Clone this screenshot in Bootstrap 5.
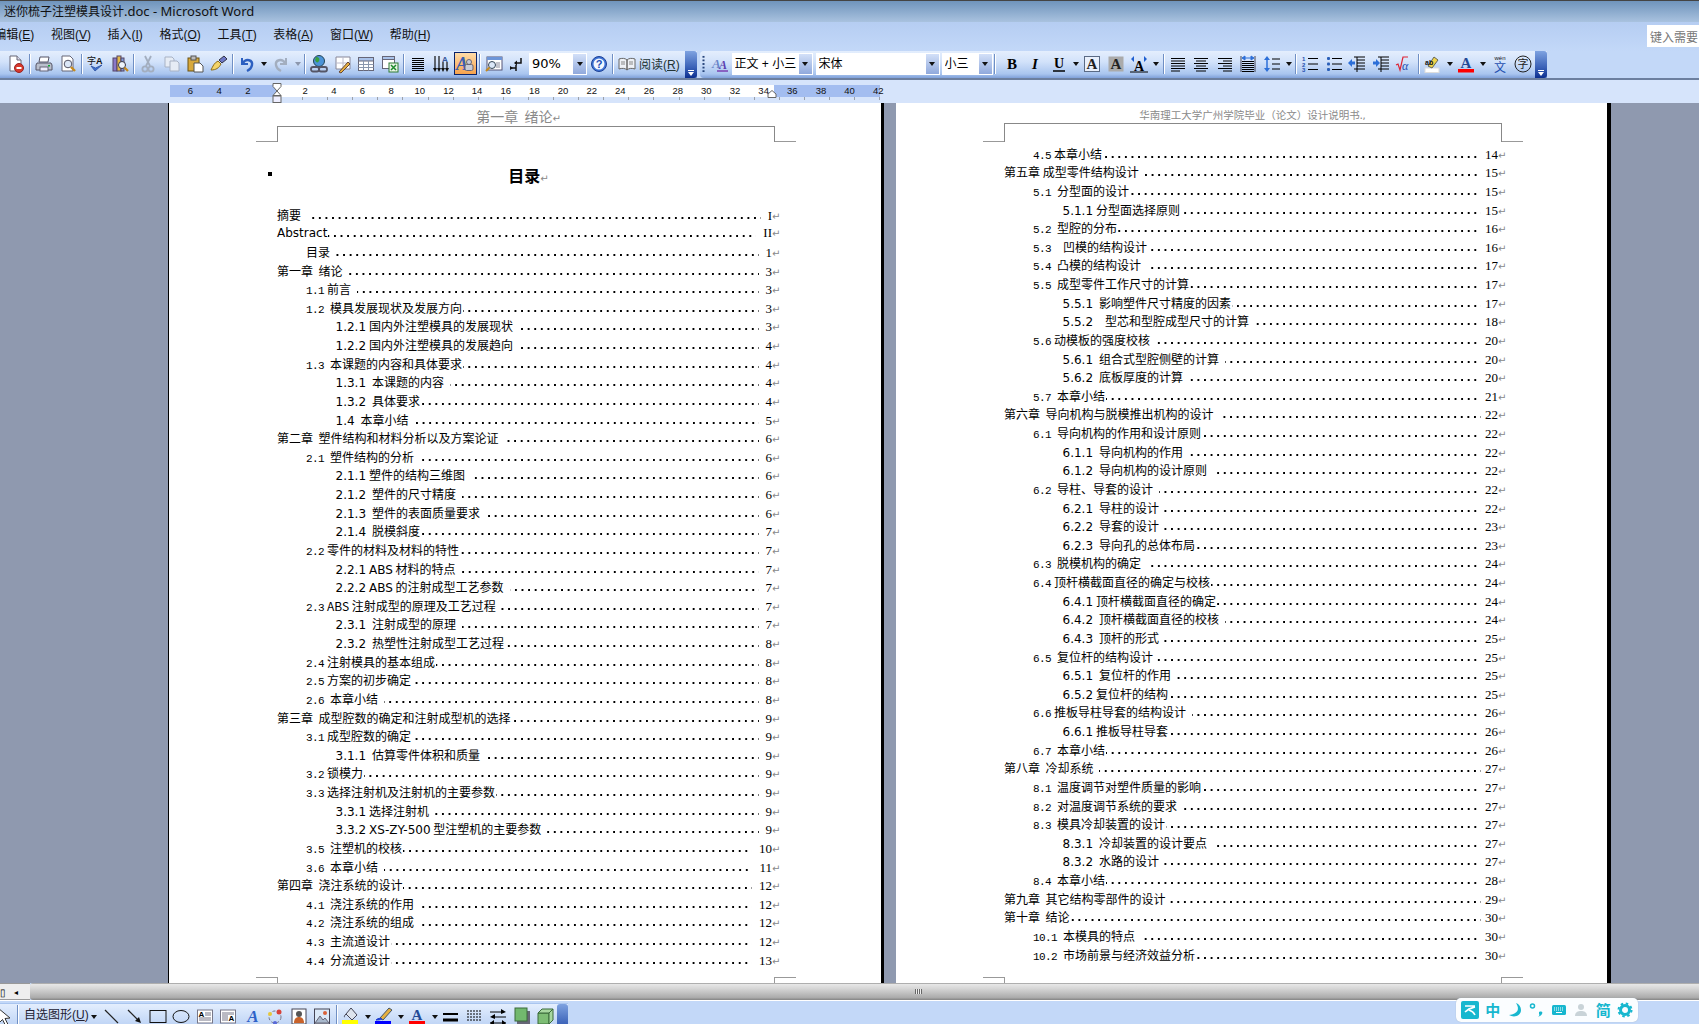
<!DOCTYPE html>
<html lang="zh"><head><meta charset="utf-8"><title>Microsoft Word</title>
<link href="https://cdn.jsdelivr.net/npm/bootstrap@5.3.0/dist/css/bootstrap.min.css" rel="stylesheet">
<style>
html,body{height:100%;overflow:hidden;margin:0}
body{font-family:"Noto Sans CJK SC","Noto Sans",sans-serif;font-size:12px;color:#000;background:#c3d8f8}
.app{height:1024px;width:1699px;overflow:hidden;position:relative}
.ttl{height:22px;border-top:1px solid #444;background:linear-gradient(180deg,#6f94bc,#a9c2df);font:13px/21px "Noto Sans","Noto Sans CJK SC",sans-serif;color:#111;white-space:nowrap;overflow:hidden;flex:none;padding-left:4px}
.ttl b{font-weight:400;font-size:12px}
.mbar{height:29px;background:linear-gradient(180deg,#b5cdf2,#c3d8f8);flex:none;overflow:hidden}
.mbar>span{padding:0 8.3px;font:12px/26px "Liberation Sans","Noto Sans CJK SC",sans-serif;color:#111;white-space:nowrap}
.mbar>span:first-child{margin-left:-14px}
.mbar>.askb{margin-left:auto;margin-top:3px;background:#fff;width:52px;height:22px;color:#777;padding:0 3px;overflow:hidden}
.tbars{height:29px;flex:none;border-bottom:2px solid #6c7f9f;gap:3px}
.tool{height:27px;padding-bottom:2px;background:linear-gradient(180deg,#e4eefd 0,#d2e2fa 40%,#a9c5ef 85%,#7fa0d9 100%);align-items:center}
.t1{width:697px;padding-left:4px}
.t2{width:847px;border-radius:4px 0 0 4px}
.cap{width:12px;height:27px;margin-left:auto;align-self:flex-start;border-radius:0 3px 3px 0;background:linear-gradient(180deg,#7ea2e0,#3b62b8 60%,#0c2f8f);position:relative;flex:none}
.cap::after{content:"";position:absolute;left:3px;bottom:7px;width:6px;height:1px;background:#fff}
.cap::before{content:"";position:absolute;left:3px;bottom:2px;border:3px solid transparent;border-top:4px solid #fff;border-bottom:0}
.ib{width:23.5px;height:23px;display:flex;align-items:center;justify-content:center;flex:none}
.ib svg{width:18px;height:18px;display:block;overflow:visible}
.ib.on{background:linear-gradient(180deg,#ffdca8,#f6a24c);border:1px solid #0a246a}
.sp{width:5px;height:22px;flex:none;display:flex;justify-content:center}
.sp::before{content:"";width:2px;height:20px;margin-top:1px;background:linear-gradient(90deg,#6f8fc4 50%,#fff 50%)}
.spx{width:2.5px;flex:none}
.dd{width:10px;flex:none;display:flex;justify-content:center}
.dd::before{content:"";border:3.5px solid transparent;border-top:4px solid #111;border-bottom:0}
.dd.off::before{border-top-color:#8c97ad}
.gr{width:6px;height:18px;flex:none;margin-left:2px;background:radial-gradient(circle,#26447a 1px,transparent 1.2px) 0 0/3px 3.6px repeat-y}
.cb{height:22px;background:#fff;display:flex;flex:none;white-space:nowrap;padding-left:2px;line-height:21px;font-family:"Liberation Sans","Noto Sans CJK SC",sans-serif;font-size:12px;overflow:hidden;border:1px solid #fff}
.cb b{font-weight:400;flex:1;overflow:hidden}
.cb i{width:13px;flex:none;background:linear-gradient(180deg,#d3e0f8,#90a9dc);display:flex;align-items:center;justify-content:center}
.cb i::before{content:"";border:3.5px solid transparent;border-top:4px solid #111;border-bottom:0}
.c90{width:58px;font:13px/20px "DejaVu Sans",sans-serif}
.c1{width:81px}.c2{width:124px;margin-left:3px}.c3{width:51px;margin-left:2px}
.tbt{width:40px;flex:none;white-space:nowrap;font:12px "Liberation Sans","Noto Sans CJK SC",sans-serif;color:#233}
.rul{height:23px;background:#d6e4fb;flex:none;position:relative}
.rin{margin-left:170px;width:710px}
.rnum{height:12px;margin-top:5px;padding-left:6.2px;background:linear-gradient(90deg,#a3bdf0 107px,#fff 107px 604px,#a3bdf0 604px)}
.rnum span{width:28.66px;flex:none;text-align:center;font:9.5px/12px "Liberation Sans",sans-serif;color:#111}
.rtk{height:6px;background:repeating-linear-gradient(90deg,#9aa0aa 0 1px,transparent 1px 25.1px) 131.6px 0/100% 3px no-repeat}
.mk1{position:absolute;left:272px;top:3px;width:10px;height:20px}
.mk2{position:absolute;left:767px;top:10px;width:10px;height:8px}
.doc{flex:1;min-height:0;background:#8f99af;padding-left:168px;overflow:hidden}
.pg{background:#fff;flex:none;height:880px;padding-left:108px;overflow:hidden}
.p1{width:716px;border-left:1px solid #000;border-right:3px solid #000;margin-right:12px;padding-top:4px}
.p2{width:715px;border-right:4px solid #000;padding-top:3px}
.htx{font-size:14px;line-height:19px;color:#8a8a8a;text-align:center;margin-right:121px;white-space:pre}
.htx2{font-size:10.5px;line-height:17px;color:#8a8a8a;text-align:center;margin-right:106px;white-space:pre}
.hbx{position:relative;width:498px;height:16px;border:solid #888;border-width:1px 1px 0;flex:none}
.p2 .hbx{height:19px}
.hbx::before,.hbx::after,.fbx::before,.fbx::after{content:"";position:absolute;width:21px;height:1px;background:#999}
.hbx::before{left:-22px;bottom:0}.hbx::after{right:-22px;bottom:0}
.fbx{position:relative;width:498px;height:6px;border:solid #999;border-width:0 1px;margin-top:auto;flex:none}
.fbx::before{left:-22px;top:0}.fbx::after{right:-22px;top:0}
.mlu{width:503px;font-size:16px;font-weight:700;line-height:24px;text-align:center;margin-top:21px;margin-bottom:18.7px;position:relative}
.mlu::before{content:"";position:absolute;left:-9px;top:9px;width:4px;height:4px;background:#000}
.toc{width:503px;flex:none}
.p2 .toc{margin-top:2.7px;width:502px}
.re{font:10px/1 "DejaVu Sans",sans-serif;color:#888;font-style:normal;text-decoration:none;width:8px;flex:none}
.rw{display:flex;height:18.64px;line-height:18.64px;white-space:nowrap;font-size:12px;align-items:baseline}
.rb{padding-left:29px}.rc{padding-left:58.5px}
.nm{font:11px/18.64px "Liberation Mono",monospace;letter-spacing:-.6px;margin-right:6px}
.rc .nm,.lat{font:12px/18.64px "DejaVu Sans",sans-serif;letter-spacing:0}
.nm.t{margin-right:3px}.nm.w{margin-right:12px}
.ld{flex:1;align-self:stretch;margin:0 7px 0 6px;background:linear-gradient(90deg,#000 2px,transparent 2px) right 11px/6.6px 2px repeat-x}
.p2 .ld{margin-right:4px}
.ld.z{margin-left:1px}
.pn{font:13px/18.64px "Liberation Serif",serif}
.scr{height:17px;flex:none}
.sl{width:30px;background:#eee;border-top:1px solid #999;border-bottom:1px solid #999;position:relative;align-items:center;flex:none;overflow:hidden;font-size:10px}
.sa{font-size:8px;margin-left:8px}
.sth{flex:1;border-radius:3px 0 0 3px;background:linear-gradient(180deg,#8e8e8e 0,#e6e6e6 8%,#d8d8d8 30%,#bcbcbc 65%,#acacac 85%,#848484 100%);padding-left:885px;display:flex;align-items:center}
.grip{width:7px;height:5px;background:repeating-linear-gradient(90deg,#666 0 1px,#eee 1px 2px)}
.bot{height:24px;flex:none;border-top:1px solid #fff;padding-top:2px;overflow:hidden}
.tb3{width:568px;height:34px;align-items:flex-start;border-top:1px solid #a9c5ef;background:linear-gradient(180deg,#e4eefd 0,#d2e2fa 30%,#bcd2f4 70%,#a9c5ef 100%);position:relative;flex:none;overflow:hidden}
.tb3 .cap{position:absolute;right:0;top:0;width:11px;height:34px;border-radius:3px 3px 0 0}
.tb3 .sp{height:30px}
.tb3 .dd{margin-top:11px}
.cur{width:15px;height:20px;overflow:hidden;flex:none}
.shp{white-space:nowrap;font:12px/21px "Liberation Sans","Noto Sans CJK SC",sans-serif;width:65px;margin:1px 0 0 4px;flex:none;color:#223}
.ime{position:absolute;left:1456px;top:998px;width:182px;height:24px;background:#fbfdff;border-radius:5px;padding:0 5px;display:flex;align-items:center;justify-content:space-between;color:#17b7cf;font-weight:700;font-size:15px;box-shadow:0 0 1px #9ab}
.ime svg{width:16px;height:16px;display:block;flex:none}
.ime svg.lg{width:18px;height:18px}
.ime span{line-height:16px}
</style></head><body>
<div class="app d-flex flex-column">
<div class="ttl"><b>迷你梳子注塑模具设计</b>.doc - Microsoft Word</div>
<div class="mbar d-flex"><span>编辑(<u>E</u>)</span><span>视图(<u>V</u>)</span><span>插入(<u>I</u>)</span><span>格式(<u>O</u>)</span><span>工具(<u>T</u>)</span><span>表格(<u>A</u>)</span><span>窗口(<u>W</u>)</span><span>帮助(<u>H</u>)</span><span class="askb">键入需要</span></div>
<div class="tbars d-flex">
<div class="tool t1 d-flex">
<div class="ib"><svg viewBox="0 0 18 18"><path d="M3 1h7l4 4v11H3z" fill="#fff" stroke="#667"/><path d="M10 1v4h4" fill="#dde" stroke="#667"/><circle cx="12" cy="13" r="4.5" fill="#d8392b" stroke="#922"/><rect x="9.5" y="12" width="5" height="2" fill="#fff"/></svg></div>
<div class="sp"></div>
<div class="ib"><svg viewBox="0 0 18 18"><path d="M5 2h9l-1 5H4z" fill="#fff" stroke="#556"/><path d="M2 8h14l1 2v5H1v-5z" fill="#b9bfcc" stroke="#556"/><rect x="5" y="12" width="8" height="4" fill="#eef" stroke="#667"/><rect x="13" y="10" width="2" height="1.5" fill="#1a3"/></svg></div>
<div class="ib"><svg viewBox="0 0 18 18"><path d="M3 1h8l3 3v12H3z" fill="#fff" stroke="#667"/><circle cx="9" cy="9" r="3.8" fill="#dbe7f8" stroke="#556"/><path d="M12 12l4 4" stroke="#c58a1d" stroke-width="2.4"/></svg></div>
<div class="sp"></div>
<div class="ib"><svg viewBox="0 0 18 18"><text x="0" y="9" font-family="Noto Sans CJK SC" font-size="9" fill="#111">字</text><text x="9" y="9" font-family="Liberation Sans" font-size="9" font-weight="700" fill="#111">A</text><path d="M4 11l4 5 7-6-6.5 3z" fill="#3d6fd0" stroke="#2a4f9f" stroke-width=".8"/></svg></div>
<div class="ib"><svg viewBox="0 0 18 18"><rect x="2" y="3" width="4" height="13" fill="#8a78c8" stroke="#546"/><rect x="6" y="1" width="4" height="15" fill="#e2b94a" stroke="#546"/><rect x="10" y="3" width="3" height="13" fill="#7f9bd6" stroke="#546"/><circle cx="11" cy="10" r="3.5" fill="#eef4fc" stroke="#334"/><path d="M13.5 12.5l3.5 3.5" stroke="#c58a1d" stroke-width="2.2"/></svg></div>
<div class="sp"></div>
<div class="ib"><svg viewBox="0 0 18 18"><g fill="none" stroke="#a3aebf" stroke-width="1.8"><path d="M6 1l5 10M12 1l-5 10"/><circle cx="6" cy="14" r="2.6"/><circle cx="12" cy="14" r="2.6"/></g></svg></div>
<div class="ib"><svg viewBox="0 0 18 18"><g fill="#e6ecf5" stroke="#a8b2c4"><path d="M2 2h7l2 2v8H2z"/><path d="M7 6h7l2 2v8H7z"/></g></svg></div>
<div class="ib"><svg viewBox="0 0 18 18"><rect x="2" y="3" width="11" height="13" fill="#d8a93c" stroke="#6d5210"/><rect x="5" y="1" width="5" height="4" fill="#bbb" stroke="#555"/><path d="M8 8h6l3 3v6H8z" fill="#fff" stroke="#555"/></svg></div>
<div class="ib"><svg viewBox="0 0 18 18"><path d="M1 15c2-4 3-7 7-9l3 3c-2 4-5 6-10 6z" fill="#f3d469" stroke="#8c6c1a"/><path d="M9 5l5-4 3 3-5 4z" fill="#6d78c8" stroke="#334"/></svg></div>
<div class="sp"></div>
<div class="ib"><svg viewBox="0 0 18 18"><path d="M4 3v6h6" fill="none" stroke="#2c5fc0" stroke-width="2"/><path d="M5 8c3-5 10-3 9 2-.5 3-3 5-5 6" fill="none" stroke="#2c5fc0" stroke-width="2.4"/></svg></div><div class="dd"></div>
<div class="ib"><svg viewBox="0 0 18 18"><path d="M14 3v6H8" fill="none" stroke="#a3aebf" stroke-width="2"/><path d="M13 8c-3-5-10-3-9 2 .5 3 3 5 5 6" fill="none" stroke="#a3aebf" stroke-width="2.4"/></svg></div><div class="dd off"></div>
<div class="sp"></div>
<div class="ib"><svg viewBox="0 0 18 18"><circle cx="9" cy="6" r="5.5" fill="#4b93d8" stroke="#245"/><path d="M6 2c3 0 4 2 3 4S6 8 5 5z" fill="#3aa040"/><g fill="none" stroke="#556" stroke-width="1.8"><rect x="1" y="12" width="8" height="4.5" rx="2"/><rect x="9" y="12" width="8" height="4.5" rx="2"/></g></svg></div>
<div class="ib"><svg viewBox="0 0 18 18"><path d="M2 2h14v12H2z" fill="#fff" stroke="#889"/><path d="M9 2v12M2 8h14" stroke="#bbc"/><path d="M5 17l9-10 2 2-9 9z" fill="#e6b040" stroke="#643"/></svg></div>
<div class="ib"><svg viewBox="0 0 18 18"><rect x="1.5" y="2.5" width="15" height="13" fill="#fff" stroke="#667"/><rect x="1.5" y="2.5" width="15" height="3.5" fill="#a9c2ea" stroke="#667"/><path d="M1.5 9.5h15M1.5 12.5h15M6.5 6v9.5M11.5 6v9.5" stroke="#8a97ad"/></svg></div>
<div class="ib"><svg viewBox="0 0 18 18"><rect x="1.5" y="1.5" width="12" height="12" fill="#fff" stroke="#667"/><rect x="1.5" y="1.5" width="12" height="3" fill="#a9c2ea" stroke="#667"/><rect x="8" y="8" width="9" height="9" fill="#eaf4e6" stroke="#2c7a34"/><path d="M10 10l5 5M15 10l-5 5" stroke="#1d8a2d" stroke-width="1.5"/></svg></div>
<div class="sp"></div>
<div class="ib"><svg viewBox="0 0 18 18"><path d="M3 3.5h12M3 5.5h12M3 7.5h12M3 9.5h12M3 11.5h12M3 13.5h12M3 15.5h12" stroke="#000"/></svg></div>
<div class="ib"><svg viewBox="0 0 18 18"><path d="M2 1v14M6 1v14M10 7v8M14 7v8" stroke="#111" stroke-width="1.2"/><path d="M0 13l2 4 2-4zM4 13l2 4 2-4zM8 13l2 4 2-4zM12 13l2 4 2-4z" fill="#111"/><text x="9" y="7" font-family="Liberation Sans" font-size="8" font-weight="700" fill="#36579a">A</text></svg></div>
<div class="ib on"><svg viewBox="0 0 18 18"><text x="0" y="15" font-family="Liberation Serif" font-size="18" font-style="italic" font-weight="700" fill="#3d5fb0">A</text><circle cx="13" cy="7" r="2.5" fill="#c8ccd8" stroke="#667"/><rect x="9" y="9.5" width="8" height="6" rx="1.5" fill="#c8ccd8" stroke="#667"/></svg></div>
<div class="sp"></div>
<div class="ib"><svg viewBox="0 0 18 18"><rect x="2" y="2" width="15" height="13" fill="#fff" stroke="#557"/><rect x="2" y="2" width="15" height="3" fill="#6d95d8"/><path d="M11 8h4M11 10h4M11 12h4" stroke="#889"/><circle cx="7" cy="10" r="3.5" fill="#dbe7f8" stroke="#345"/><path d="M4.5 12.5L1 16" stroke="#c58a1d" stroke-width="2"/></svg></div>
<div class="ib"><svg viewBox="0 0 18 18"><path d="M13 3v5H7" fill="none" stroke="#111" stroke-width="1.5"/><path d="M9 5.5L6 8l3 2.5z" fill="#111"/><path d="M3 13h5v-3M8 13v3" stroke="#111" stroke-width="1.5" fill="none"/><path d="M2 11l3 2-3 2z" fill="#111"/></svg></div>
<div class="cb c90"><b>90%</b><i></i></div>
<div class="ib"><svg viewBox="0 0 18 18"><circle cx="9" cy="9" r="7.5" fill="#3e74d6" stroke="#1c3f95"/><circle cx="9" cy="9" r="5.5" fill="#f2f6fe"/><text x="9" y="13" text-anchor="middle" font-family="Liberation Sans" font-size="11" font-weight="700" fill="#1d4fb5">?</text></svg></div>
<div class="sp"></div>
<div class="ib"><svg viewBox="0 0 18 18"><path d="M1 4c3-1 6-1 8 1v10c-2-2-5-2-8-1zM17 4c-3-1-6-1-8 1v10c2-2 5-2 8-1z" fill="#eef1f6" stroke="#666"/><path d="M3 7h4M3 9h4M11 7h4M11 9h4" stroke="#888"/></svg></div>
<div class="tbt">阅读(<u>R</u>)</div>
<div class="cap"></div>
</div>
<div class="tool t2 d-flex">
<div class="gr"></div>
<div class="ib"><svg viewBox="0 0 18 18"><text x="1" y="13" font-family="Liberation Serif" font-size="13" font-style="italic" font-weight="700" fill="#6a87c9">A</text><text x="8" y="14" font-family="Liberation Serif" font-size="12" font-style="italic" font-weight="700" fill="#5a3fb0">A</text><path d="M6 16h11" stroke="#7b3fb0" stroke-width="1.5"/></svg></div>
<div class="cb c1"><b>正文 + 小三</b><i></i></div>
<div class="cb c2"><b>宋体</b><i></i></div>
<div class="cb c3"><b>小三</b><i></i></div>
<div class="sp"></div><div class="spx"></div>
<div class="ib"><svg viewBox="0 0 18 18"><text x="9" y="14" text-anchor="middle" font-family="Liberation Serif" font-size="15" font-weight="700" fill="#000">B</text></svg></div>
<div class="ib"><svg viewBox="0 0 18 18"><text x="9" y="14" text-anchor="middle" font-family="Liberation Serif" font-size="15" font-style="italic" font-weight="700" fill="#000">I</text></svg></div>
<div class="ib"><svg viewBox="0 0 18 18"><text x="9" y="13" text-anchor="middle" font-family="Liberation Serif" font-size="14" font-weight="700" fill="#000">U</text><path d="M3 16h12" stroke="#000" stroke-width="1.5"/></svg></div><div class="dd"></div>
<div class="ib"><svg viewBox="0 0 18 18"><rect x="1.5" y="1.5" width="15" height="15" fill="#e9f0fc" stroke="#5a6a84"/><text x="9" y="14" text-anchor="middle" font-family="Liberation Serif" font-size="15" font-weight="700" fill="#222">A</text></svg></div>
<div class="ib"><svg viewBox="0 0 18 18"><rect x="1.5" y="1.5" width="15" height="15" fill="#aaa"/><text x="9" y="14" text-anchor="middle" font-family="Liberation Serif" font-size="15" font-weight="700" fill="#222">A</text></svg></div>
<div class="ib"><svg viewBox="0 0 18 18"><text x="9" y="16" text-anchor="middle" font-family="Liberation Serif" font-size="14" font-weight="700" fill="#000">A</text><path d="M1 4l3-3v6zM17 4l-3-3v6z" fill="#1f5fd0"/><path d="M0 17h18" stroke="#000"/></svg></div><div class="dd"></div>
<div class="sp"></div>
<div class="ib"><svg viewBox="0 0 18 18"><path d="M2 3.5h14M2 6h14M2 8.5h14M2 11h14M2 13.5h14M2 16h9" stroke="#000"/></svg></div>
<div class="ib"><svg viewBox="0 0 18 18"><path d="M2 3.5h14M4 6h10M2 8.5h14M4 11h10M2 13.5h14M4 16h10" stroke="#000"/></svg></div>
<div class="ib"><svg viewBox="0 0 18 18"><path d="M2 3.5h14M7 6h9M2 8.5h14M7 11h9M2 13.5h14M7 16h9" stroke="#000"/></svg></div>
<div class="ib"><svg viewBox="0 0 18 18"><path d="M2 1v16M16 1v16" stroke="#445"/><path d="M3 6.5h12M3 8.5h12M3 10.5h12M3 12.5h12M3 14.5h12M3 16.5h12" stroke="#000"/><path d="M3 3l3-2v4zM15 3l-3-2v4zM6 3h6" fill="#2c6fd8" stroke="#2c6fd8"/></svg></div>
<div class="ib"><svg viewBox="0 0 18 18"><path d="M4 4v10" stroke="#2c6fd8" stroke-width="1.5"/><path d="M1 5l3-4 3 4zM1 13l3 4 3-4z" fill="#2c6fd8"/><path d="M9 4h8M9 9h8M9 14h8" stroke="#000"/></svg></div><div class="dd"></div>
<div class="sp"></div>
<div class="ib"><svg viewBox="0 0 18 18"><text x="1" y="6" font-family="Liberation Sans" font-size="6" font-weight="700" fill="#1f4fb0">1</text><text x="1" y="11.5" font-family="Liberation Sans" font-size="6" font-weight="700" fill="#1f4fb0">2</text><text x="1" y="17" font-family="Liberation Sans" font-size="6" font-weight="700" fill="#1f4fb0">3</text><path d="M7 3.5h10M7 9h10M7 14.5h10" stroke="#000"/></svg></div>
<div class="ib"><svg viewBox="0 0 18 18"><g fill="#2a5fb8"><rect x="2" y="2" width="3" height="3" rx="1"/><rect x="2" y="7.5" width="3" height="3" rx="1"/><rect x="2" y="13" width="3" height="3" rx="1"/></g><path d="M7 3.5h10M7 9h10M7 14.5h10" stroke="#000"/></svg></div>
<div class="ib"><svg viewBox="0 0 18 18"><path d="M6 2h11M9 5h8M9 8h8M9 11h8M6 14h11M9 2v15" stroke="#000"/><path d="M0 8l4-4v2.5h3v3H4V12z" fill="#2c6fd8"/></svg></div>
<div class="ib"><svg viewBox="0 0 18 18"><path d="M6 2h11M9 5h8M9 8h8M9 11h8M6 14h11M9 2v15" stroke="#000"/><path d="M8 8l-4-4v2.5H1v3h3V12z" fill="#2c6fd8"/></svg></div>
<div class="ib"><svg viewBox="0 0 18 18"><path d="M1 10l2-1 2 6 3-13h5" fill="none" stroke="#d23" stroke-width="1.2"/><text x="7" y="15" font-family="Liberation Serif" font-size="12" font-style="italic" fill="#1f4fb0">α</text></svg></div>
<div class="sp"></div>
<div class="ib"><svg viewBox="0 0 18 18"><rect x="1" y="13" width="14" height="4.5" fill="#fff" stroke="#ddd"/><path d="M4 11l6-9 4 3-6 8z" fill="#f0d44a" stroke="#665"/><text x="1" y="10" font-family="Liberation Sans" font-size="7" font-weight="700" fill="#111">ab</text></svg></div><div class="dd"></div>
<div class="ib"><svg viewBox="0 0 18 18"><text x="9" y="13" text-anchor="middle" font-family="Liberation Serif" font-size="15" font-weight="700" fill="#234a96">A</text><rect x="1" y="14" width="16" height="3.5" fill="#f00"/></svg></div><div class="dd"></div>
<div class="ib"><svg viewBox="0 0 18 18"><text x="9" y="5" text-anchor="middle" font-family="Liberation Sans" font-size="6" fill="#111">wén</text><text x="9" y="17" text-anchor="middle" font-family="Noto Sans CJK SC" font-size="12" fill="#1f4fb0">文</text></svg></div>
<div class="ib"><svg viewBox="0 0 18 18"><circle cx="9" cy="9" r="8" fill="none" stroke="#222"/><text x="9" y="13" text-anchor="middle" font-family="Noto Sans CJK SC" font-size="11" fill="#222">字</text></svg></div>
<div class="cap"></div>
</div>
</div>
<div class="rul">
<div class="rin">
<div class="rnum d-flex"><span>6</span><span>4</span><span>2</span><span></span><span>2</span><span>4</span><span>6</span><span>8</span><span>10</span><span>12</span><span>14</span><span>16</span><span>18</span><span>20</span><span>22</span><span>24</span><span>26</span><span>28</span><span>30</span><span>32</span><span>34</span><span>36</span><span>38</span><span>40</span><span>42</span></div>
<div class="rtk"></div>
</div>
<svg class="mk1" viewBox="0 0 10 20"><path d="M1 .5h8v3L5 8 1 3.5z" fill="#fff" stroke="#666"/><path d="M1 12.5L5 8l4 4.5z" fill="#fff" stroke="#666"/><rect x="1" y="13" width="8" height="6.5" fill="#eef" stroke="#666"/></svg>
<svg class="mk2" viewBox="0 0 10 8"><path d="M5 .5l4 3.5v3.5H1V4z" fill="#fff" stroke="#666"/></svg>
</div>
<div class="doc d-flex">
<div class="pg p1 d-flex flex-column">
<div class="htx">第一章  绪论<i class="re">↵</i></div>
<div class="hbx"></div>
<div class="mlu">目录<i class="re">↵</i></div>
<div class="toc">
<div class="rw"><span class="me-1">摘要</span><i class="ld"></i><span class="pn">I</span><i class="re">↵</i></div>
<div class="rw"><span class="lat">Abstract</span><i class="ld z"></i><span class="pn">II</span><i class="re">↵</i></div>
<div class="rw rb"><span>目录</span><i class="ld"></i><span class="pn">1</span><i class="re">↵</i></div>
<div class="rw"><span>第一章&nbsp; 绪论</span><i class="ld"></i><span class="pn">3</span><i class="re">↵</i></div>
<div class="rw rb"><span class="nm t">1.1</span><span>前言</span><i class="ld"></i><span class="pn">3</span><i class="re">↵</i></div>
<div class="rw rb"><span class="nm">1.2</span><span>模具发展现状及发展方向</span><i class="ld z"></i><span class="pn">3</span><i class="re">↵</i></div>
<div class="rw rc"><span class="nm t">1.2.1</span><span>国内外注塑模具的发展现状</span><i class="ld"></i><span class="pn">3</span><i class="re">↵</i></div>
<div class="rw rc"><span class="nm t">1.2.2</span><span>国内外注塑模具的发展趋向</span><i class="ld"></i><span class="pn">4</span><i class="re">↵</i></div>
<div class="rw rb"><span class="nm">1.3</span><span>本课题的内容和具体要求</span><i class="ld z"></i><span class="pn">4</span><i class="re">↵</i></div>
<div class="rw rc"><span class="nm">1.3.1</span><span>本课题的内容</span><i class="ld"></i><span class="pn">4</span><i class="re">↵</i></div>
<div class="rw rc"><span class="nm">1.3.2</span><span>具体要求</span><i class="ld z"></i><span class="pn">4</span><i class="re">↵</i></div>
<div class="rw rc"><span class="nm">1.4</span><span>本章小结</span><i class="ld"></i><span class="pn">5</span><i class="re">↵</i></div>
<div class="rw"><span>第二章&nbsp; 塑件结构和材料分析以及方案论证</span><i class="ld"></i><span class="pn">6</span><i class="re">↵</i></div>
<div class="rw rb"><span class="nm">2.1</span><span>塑件结构的分析</span><i class="ld"></i><span class="pn">6</span><i class="re">↵</i></div>
<div class="rw rc"><span class="nm t">2.1.1</span><span>塑件的结构三维图</span><i class="ld"></i><span class="pn">6</span><i class="re">↵</i></div>
<div class="rw rc"><span class="nm">2.1.2</span><span>塑件的尺寸精度</span><i class="ld"></i><span class="pn">6</span><i class="re">↵</i></div>
<div class="rw rc"><span class="nm">2.1.3</span><span>塑件的表面质量要求</span><i class="ld"></i><span class="pn">6</span><i class="re">↵</i></div>
<div class="rw rc"><span class="nm">2.1.4</span><span>脱模斜度</span><i class="ld z"></i><span class="pn">7</span><i class="re">↵</i></div>
<div class="rw rb"><span class="nm t">2.2</span><span>零件的材料及材料的特性</span><i class="ld z"></i><span class="pn">7</span><i class="re">↵</i></div>
<div class="rw rc"><span class="nm t">2.2.1</span><span><span class="lat">ABS</span> 材料的特点</span><i class="ld"></i><span class="pn">7</span><i class="re">↵</i></div>
<div class="rw rc"><span class="nm t">2.2.2</span><span><span class="lat">ABS</span> 的注射成型工艺参数</span><i class="ld"></i><span class="pn">7</span><i class="re">↵</i></div>
<div class="rw rb"><span class="nm t">2.3</span><span>ABS 注射成型的原理及工艺过程</span><i class="ld z"></i><span class="pn">7</span><i class="re">↵</i></div>
<div class="rw rc"><span class="nm">2.3.1</span><span>注射成型的原理</span><i class="ld"></i><span class="pn">7</span><i class="re">↵</i></div>
<div class="rw rc"><span class="nm">2.3.2</span><span>热塑性注射成型工艺过程</span><i class="ld z"></i><span class="pn">8</span><i class="re">↵</i></div>
<div class="rw rb"><span class="nm t">2.4</span><span>注射模具的基本组成</span><i class="ld z"></i><span class="pn">8</span><i class="re">↵</i></div>
<div class="rw rb"><span class="nm t">2.5</span><span>方案的初步确定</span><i class="ld z"></i><span class="pn">8</span><i class="re">↵</i></div>
<div class="rw rb"><span class="nm">2.6</span><span>本章小结</span><i class="ld"></i><span class="pn">8</span><i class="re">↵</i></div>
<div class="rw"><span>第三章&nbsp; 成型腔数的确定和注射成型机的选择</span><i class="ld z"></i><span class="pn">9</span><i class="re">↵</i></div>
<div class="rw rb"><span class="nm t">3.1</span><span>成型腔数的确定</span><i class="ld z"></i><span class="pn">9</span><i class="re">↵</i></div>
<div class="rw rc"><span class="nm">3.1.1</span><span>估算零件体积和质量</span><i class="ld"></i><span class="pn">9</span><i class="re">↵</i></div>
<div class="rw rb"><span class="nm t">3.2</span><span>锁模力</span><i class="ld z"></i><span class="pn">9</span><i class="re">↵</i></div>
<div class="rw rb"><span class="nm t">3.3</span><span>选择注射机及注射机的主要参数</span><i class="ld z"></i><span class="pn">9</span><i class="re">↵</i></div>
<div class="rw rc"><span class="nm t">3.3.1</span><span>选择注射机</span><i class="ld"></i><span class="pn">9</span><i class="re">↵</i></div>
<div class="rw rc"><span class="nm t">3.3.2</span><span><span class="lat">XS-ZY-500</span> 型注塑机的主要参数</span><i class="ld"></i><span class="pn">9</span><i class="re">↵</i></div>
<div class="rw rb"><span class="nm">3.5</span><span>注塑机的校核</span><i class="ld z"></i><span class="pn">10</span><i class="re">↵</i></div>
<div class="rw rb"><span class="nm">3.6</span><span>本章小结</span><i class="ld"></i><span class="pn">11</span><i class="re">↵</i></div>
<div class="rw"><span>第四章&nbsp; 浇注系统的设计</span><i class="ld z"></i><span class="pn">12</span><i class="re">↵</i></div>
<div class="rw rb"><span class="nm">4.1</span><span>浇注系统的作用</span><i class="ld"></i><span class="pn">12</span><i class="re">↵</i></div>
<div class="rw rb"><span class="nm">4.2</span><span>浇注系统的组成</span><i class="ld"></i><span class="pn">12</span><i class="re">↵</i></div>
<div class="rw rb"><span class="nm">4.3</span><span>主流道设计</span><i class="ld z"></i><span class="pn">12</span><i class="re">↵</i></div>
<div class="rw rb"><span class="nm">4.4</span><span>分流道设计</span><i class="ld z"></i><span class="pn">13</span><i class="re">↵</i></div>
</div>
<div class="fbx"></div>
</div>
<div class="pg p2 d-flex flex-column">
<div class="htx2">华南理工大学广州学院毕业（论文）设计说明书.<i class="re">,</i></div>
<div class="hbx"></div>
<div class="toc">
<div class="rw rb"><span class="nm t">4.5</span><span>本章小结</span><i class="ld z"></i><span class="pn">14</span><i class="re">↵</i></div>
<div class="rw"><span>第五章 成型零件结构设计</span><i class="ld"></i><span class="pn">15</span><i class="re">↵</i></div>
<div class="rw rb"><span class="nm">5.1</span><span>分型面的设计</span><i class="ld z"></i><span class="pn">15</span><i class="re">↵</i></div>
<div class="rw rc"><span class="nm t">5.1.1</span><span>分型面选择原则</span><i class="ld z"></i><span class="pn">15</span><i class="re">↵</i></div>
<div class="rw rb"><span class="nm">5.2</span><span>型腔的分布</span><i class="ld z"></i><span class="pn">16</span><i class="re">↵</i></div>
<div class="rw rb"><span class="nm w">5.3</span><span>凹模的结构设计</span><i class="ld z"></i><span class="pn">16</span><i class="re">↵</i></div>
<div class="rw rb"><span class="nm">5.4</span><span>凸模的结构设计</span><i class="ld"></i><span class="pn">17</span><i class="re">↵</i></div>
<div class="rw rb"><span class="nm">5.5</span><span>成型零件工作尺寸的计算</span><i class="ld z"></i><span class="pn">17</span><i class="re">↵</i></div>
<div class="rw rc"><span class="nm">5.5.1</span><span>影响塑件尺寸精度的因素</span><i class="ld z"></i><span class="pn">17</span><i class="re">↵</i></div>
<div class="rw rc"><span class="nm w">5.5.2</span><span>型芯和型腔成型尺寸的计算</span><i class="ld"></i><span class="pn">18</span><i class="re">↵</i></div>
<div class="rw rb"><span class="nm t">5.6</span><span>动模板的强度校核</span><i class="ld"></i><span class="pn">20</span><i class="re">↵</i></div>
<div class="rw rc"><span class="nm">5.6.1</span><span>组合式型腔侧壁的计算</span><i class="ld"></i><span class="pn">20</span><i class="re">↵</i></div>
<div class="rw rc"><span class="nm">5.6.2</span><span>底板厚度的计算</span><i class="ld"></i><span class="pn">20</span><i class="re">↵</i></div>
<div class="rw rb"><span class="nm">5.7</span><span>本章小结</span><i class="ld z"></i><span class="pn">21</span><i class="re">↵</i></div>
<div class="rw"><span>第六章&nbsp; 导向机构与脱模推出机构的设计</span><i class="ld"></i><span class="pn">22</span><i class="re">↵</i></div>
<div class="rw rb"><span class="nm">6.1</span><span>导向机构的作用和设计原则</span><i class="ld z"></i><span class="pn">22</span><i class="re">↵</i></div>
<div class="rw rc"><span class="nm">6.1.1</span><span>导向机构的作用</span><i class="ld"></i><span class="pn">22</span><i class="re">↵</i></div>
<div class="rw rc"><span class="nm">6.1.2</span><span>导向机构的设计原则</span><i class="ld"></i><span class="pn">22</span><i class="re">↵</i></div>
<div class="rw rb"><span class="nm">6.2</span><span>导柱、导套的设计</span><i class="ld"></i><span class="pn">22</span><i class="re">↵</i></div>
<div class="rw rc"><span class="nm">6.2.1</span><span>导柱的设计</span><i class="ld z"></i><span class="pn">22</span><i class="re">↵</i></div>
<div class="rw rc"><span class="nm">6.2.2</span><span>导套的设计</span><i class="ld z"></i><span class="pn">23</span><i class="re">↵</i></div>
<div class="rw rc"><span class="nm">6.2.3</span><span>导向孔的总体布局</span><i class="ld z"></i><span class="pn">23</span><i class="re">↵</i></div>
<div class="rw rb"><span class="nm">6.3</span><span>脱模机构的确定</span><i class="ld"></i><span class="pn">24</span><i class="re">↵</i></div>
<div class="rw rb"><span class="nm t">6.4</span><span>顶杆横截面直径的确定与校核</span><i class="ld z"></i><span class="pn">24</span><i class="re">↵</i></div>
<div class="rw rc"><span class="nm t">6.4.1</span><span>顶杆横截面直径的确定</span><i class="ld z"></i><span class="pn">24</span><i class="re">↵</i></div>
<div class="rw rc"><span class="nm">6.4.2</span><span>顶杆横截面直径的校核</span><i class="ld"></i><span class="pn">24</span><i class="re">↵</i></div>
<div class="rw rc"><span class="nm">6.4.3</span><span>顶杆的形式</span><i class="ld z"></i><span class="pn">25</span><i class="re">↵</i></div>
<div class="rw rb"><span class="nm">6.5</span><span>复位杆的结构设计</span><i class="ld z"></i><span class="pn">25</span><i class="re">↵</i></div>
<div class="rw rc"><span class="nm">6.5.1</span><span>复位杆的作用</span><i class="ld"></i><span class="pn">25</span><i class="re">↵</i></div>
<div class="rw rc"><span class="nm t">6.5.2</span><span>复位杆的结构</span><i class="ld z"></i><span class="pn">25</span><i class="re">↵</i></div>
<div class="rw rb"><span class="nm t">6.6</span><span>推板导柱导套的结构设计</span><i class="ld"></i><span class="pn">26</span><i class="re">↵</i></div>
<div class="rw rc"><span class="nm t">6.6.1</span><span>推板导柱导套</span><i class="ld z"></i><span class="pn">26</span><i class="re">↵</i></div>
<div class="rw rb"><span class="nm">6.7</span><span>本章小结</span><i class="ld z"></i><span class="pn">26</span><i class="re">↵</i></div>
<div class="rw"><span>第八章&nbsp; 冷却系统</span><i class="ld"></i><span class="pn">27</span><i class="re">↵</i></div>
<div class="rw rb"><span class="nm">8.1</span><span>温度调节对塑件质量的影响</span><i class="ld z"></i><span class="pn">27</span><i class="re">↵</i></div>
<div class="rw rb"><span class="nm">8.2</span><span>对温度调节系统的要求</span><i class="ld"></i><span class="pn">27</span><i class="re">↵</i></div>
<div class="rw rb"><span class="nm">8.3</span><span>模具冷却装置的设计</span><i class="ld z"></i><span class="pn">27</span><i class="re">↵</i></div>
<div class="rw rc"><span class="nm">8.3.1</span><span>冷却装置的设计要点</span><i class="ld"></i><span class="pn">27</span><i class="re">↵</i></div>
<div class="rw rc"><span class="nm">8.3.2</span><span>水路的设计</span><i class="ld z"></i><span class="pn">27</span><i class="re">↵</i></div>
<div class="rw rb"><span class="nm">8.4</span><span>本章小结</span><i class="ld z"></i><span class="pn">28</span><i class="re">↵</i></div>
<div class="rw"><span>第九章&nbsp; 其它结构零部件的设计</span><i class="ld z"></i><span class="pn">29</span><i class="re">↵</i></div>
<div class="rw"><span>第十章&nbsp; 结论</span><i class="ld z"></i><span class="pn">30</span><i class="re">↵</i></div>
<div class="rw rb"><span class="nm">10.1</span><span>本模具的特点</span><i class="ld"></i><span class="pn">30</span><i class="re">↵</i></div>
<div class="rw rb"><span class="nm">10.2</span><span>市场前景与经济效益分析</span><i class="ld z"></i><span class="pn">30</span><i class="re">↵</i></div>
</div>
<div class="fbx"></div>
</div>
</div>
<div class="scr d-flex">
<div class="sl d-flex"><span>▯</span><span class="sa">◂</span></div>
<div class="sth"><div class="grip"></div></div>
</div>
<div class="bot">
<div class="tb3 d-flex">
<div class="cur"><svg viewBox="0 0 18 20" width="18" height="20"><path d="M-2 3l12 10-5 .5 3 6-2.5 1-3-6-4 4z" fill="#fff" stroke="#333"/></svg></div>
<div class="sp"></div>
<div class="shp">自选图形(<u>U</u>)</div><div class="dd"></div>
<div class="ib"><svg viewBox="0 0 18 18"><path d="M3 3l13 13" stroke="#222" stroke-width="1.2"/></svg></div>
<div class="ib"><svg viewBox="0 0 18 18"><path d="M3 3l11 11" stroke="#222" stroke-width="1.2"/><path d="M16 16l-6-2 4-4z" fill="#111"/></svg></div>
<div class="ib"><svg viewBox="0 0 18 18"><rect x="1" y="3.5" width="16" height="12" fill="none" stroke="#111"/></svg></div>
<div class="ib"><svg viewBox="0 0 18 18"><ellipse cx="9" cy="9.5" rx="8" ry="6" fill="none" stroke="#111"/></svg></div>
<div class="ib"><svg viewBox="0 0 18 18"><rect x="1.5" y="3" width="15" height="13" fill="#fff" stroke="#778"/><text x="2.5" y="10" font-family="Liberation Sans" font-weight="700" font-size="8" fill="#000">A</text><path d="M9 6h6M9 8h6M3 11h12M3 13h12" stroke="#778"/></svg></div>
<div class="ib"><svg viewBox="0 0 18 18"><rect x="1.5" y="3" width="15" height="13" fill="#fff" stroke="#778"/><text x="9.5" y="14" font-family="Liberation Sans" font-weight="700" font-size="8" fill="#000">A</text><path d="M4 5v9M6 5v9M8 5v9M10 5v3M12 5v3M14 5v3" stroke="#778"/></svg></div>
<div class="ib"><svg viewBox="0 0 18 18"><text x="10" y="15" text-anchor="middle" font-family="Liberation Serif" font-size="17" font-style="italic" font-weight="700" fill="#2f62c8">A</text></svg></div>
<div class="ib"><svg viewBox="0 0 18 18"><circle cx="9" cy="10" r="6" fill="none" stroke="#778" stroke-dasharray="3 2"/><circle cx="13" cy="5" r="2.5" fill="#d8423a"/><circle cx="4" cy="7" r="2" fill="#e8c83a"/><circle cx="9" cy="16" r="2" fill="#5a6ad8"/></svg></div>
<div class="ib"><svg viewBox="0 0 18 18"><rect x="2" y="2" width="14" height="15" fill="#fff" stroke="#445"/><circle cx="9" cy="7" r="3" fill="#555"/><path d="M4 16c0-4 2-6 5-6s5 2 5 6z" fill="#c8622a"/></svg></div>
<div class="ib"><svg viewBox="0 0 18 18"><rect x="1.5" y="2" width="15" height="15" fill="#dbe9f8" stroke="#445"/><circle cx="12" cy="6" r="2" fill="#d8623a"/><path d="M2 16l5-7 3 4 2-2 4 5z" fill="#a8b8cc" stroke="#667"/></svg></div>
<div class="sp"></div>
<div class="ib"><svg viewBox="0 0 18 18"><path d="M9 1l6 7-5 5-6-6z" fill="#dde4ee" stroke="#445"/><path d="M4 7c-2 2-2 3-1 3" stroke="#445" fill="none"/><rect x="0" y="13" width="16" height="5" fill="#ff0"/></svg></div><div class="dd"></div>
<div class="ib"><svg viewBox="0 0 18 18"><path d="M5 11l9-10 3 2-9 10z" fill="#e6b040" stroke="#456"/><path d="M1 13c2-2 4-2 6-1-2 1-4 1-6 1z" fill="#1f3fd0" stroke="#1f3fd0"/><rect x="0" y="14" width="16" height="4" fill="#00f"/></svg></div><div class="dd"></div>
<div class="ib"><svg viewBox="0 0 18 18"><text x="8" y="13" text-anchor="middle" font-family="Liberation Serif" font-size="15" font-weight="700" fill="#234a96">A</text><rect x="0" y="14" width="16" height="4" fill="#f00"/></svg></div><div class="dd"></div>
<div class="ib"><svg viewBox="0 0 18 18"><path d="M1 7h15" stroke="#000" stroke-width="2"/><path d="M1 13h15" stroke="#000" stroke-width="3"/></svg></div>
<div class="ib"><svg viewBox="0 0 18 18"><path d="M1 4h15M1 7h15M1 10h15M1 13h15" stroke="#000" stroke-dasharray="2 1"/></svg></div>
<div class="ib"><svg viewBox="0 0 18 18"><path d="M1 5h14M3 10h14M1 16h16" stroke="#000"/><path d="M17 5l-5-3v5zM1 10l5-3v5zM1 16l4-3v6zM17 16l-4-3v6z" fill="#000"/></svg></div>
<div class="ib"><svg viewBox="0 0 18 18"><rect x="4" y="4" width="13" height="13" fill="#667"/><rect x="2" y="1" width="12" height="13" fill="#72b86e" stroke="#3a6a3a"/></svg></div>
<div class="ib"><svg viewBox="0 0 18 18"><path d="M2 6h11v11H2z" fill="#7dbd74" stroke="#3a6a3a"/><path d="M2 6l4-4h11L13 6zM13 6l4-4v11l-4 4z" fill="#a8d8a0" stroke="#3a6a3a"/></svg></div>
<div class="cap"></div>
</div>
</div>
<div class="ime">
<svg class="lg" viewBox="0 0 18 18"><rect width="18" height="18" rx="2" fill="#17b7cf"/><path d="M4 5h10M4 11c4-4 6-4 10-5M8 9c3 1 5 3 6 5" stroke="#fff" stroke-width="1.6" fill="none"/></svg>
<span>中</span>
<svg viewBox="0 0 16 16"><path d="M9 1c4 6 2 11-7 12 5 3 12 1 12-5 0-3-2-6-5-7z" fill="#17b7cf"/></svg>
<svg viewBox="0 0 16 16"><circle cx="3.5" cy="4" r="2" fill="none" stroke="#17b7cf" stroke-width="1.5"/><path d="M10 10c3-1 4 0 3 2-1 1.5-2 2-4 3 1-1 2-2 1-3z" fill="#17b7cf"/></svg>
<svg viewBox="0 0 16 16"><rect x="1" y="3" width="14" height="10" rx="1.5" fill="#17b7cf"/><path d="M3 6h10M3 8h10" stroke="#fff" stroke-dasharray="1 1"/><path d="M5 10.5h6" stroke="#fff"/></svg>
<svg viewBox="0 0 16 16"><circle cx="8" cy="5" r="3" fill="#c9d3d8"/><path d="M2 14c0-4 3-5 6-5s6 1 6 5z" fill="#c9d3d8"/></svg>
<span>简</span>
<svg viewBox="0 0 16 16"><circle cx="8" cy="8" r="4.5" fill="none" stroke="#17b7cf" stroke-width="3"/><circle cx="8" cy="8" r="6.5" fill="none" stroke="#17b7cf" stroke-width="2" stroke-dasharray="2.5 2.6"/></svg>
</div>
</div>
</body></html>
